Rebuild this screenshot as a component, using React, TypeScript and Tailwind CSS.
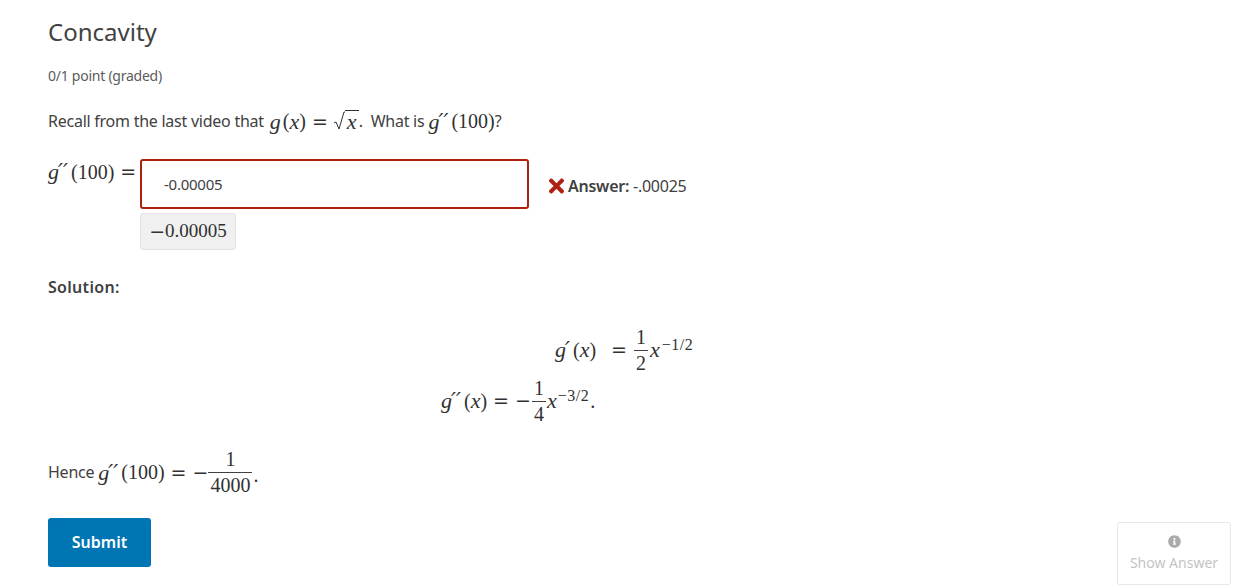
import type { ReactNode } from "react"
import { FaInfoCircle, FaTimes } from "react-icons/fa"

function V({ children, className = "" }: { children: ReactNode; className?: string }) {
  return <i className={`font-['Liberation_Serif',serif] text-[22px] ${className}`}>{children}</i>
}

// wide operators, closer to the math font than the serif's own = and −
function Op({ children, className = "" }: { children: string; className?: string }) {
  return <span className={`font-['DejaVu_Sans',sans-serif] text-[19px] ${className}`}>{children}</span>
}

function Frac({ top, bottom }: { top: string; bottom: string }) {
  return (
    <span className="inline-flex flex-col items-center align-middle leading-none">
      <span className="px-[2px] pb-[3px] text-[20px] leading-[20px]">{top}</span>
      <span className="self-stretch border-t border-[#414141] px-[2px] pt-[2px] text-center text-[20px] leading-[20px]">{bottom}</span>
    </span>
  )
}

function Math({ children, className = "" }: { children: ReactNode; className?: string }) {
  return (
    <span className={`inline-flex items-center whitespace-nowrap font-['Liberation_Serif',serif] text-[20px] tracking-normal text-[#313131] ${className}`}>
      {children}
    </span>
  )
}

function G({ primes = 0 }: { primes?: number }) {
  return (
    <span className="mr-[2px] inline-flex">
      <V>g</V>
      {primes > 0 && (
        <i className="-ml-[1px] mr-[1px] mt-[7px] font-['DejaVu_Sans',sans-serif] text-[22px] leading-[20px]">
          {primes === 2 ? "′′" : "′"}
        </i>
      )}
    </span>
  )
}

function Exp({ children }: { children: ReactNode }) {
  return <span className="-mt-[10px] text-[16px] leading-[20px] tracking-[0.5px]">{children}</span>
}

export default function App() {
  return (
    <div className="h-[588px] overflow-hidden bg-white pl-12 pt-[17px] font-['Noto_Sans',sans-serif] tracking-[-0.25px] text-[#414141]">
      <h3 className="text-[24px] leading-[30px] tracking-normal">Concavity</h3>
      <div className="mt-[19px] text-[14px] leading-[20px] text-[#5b5b5b]">0/1 point (graded)</div>

      <p className="mt-[22px] flex h-[26px] items-center text-[16px]">
        Recall from the last video that
        <Math className="ml-[6px]">
          <G />
          (<V>x</V>)<Op className="ml-[6px] mr-[5px]">=</Op>
          <svg viewBox="0 0 12 20" className="h-[22px] w-[12px] text-[#313131]" fill="none" stroke="currentColor">
            <path d="M1 12l2-1 3 7L11 1h1" strokeWidth="1" />
          </svg>
          <span className="border-t border-[#313131] px-[2px] leading-[22px]">
            <V>x</V>
          </span>
        </Math>
        <span>.</span>
        <span className="ml-[8px]">What is</span>
        <Math className="ml-[4px]">
          <G primes={2} />
          (100)
        </Math>
        <span>?</span>
      </p>

      <div className="mt-[25px] flex items-start">
        <Math className="-mt-[4px] w-[92px]">
          <G primes={2} />
          (100)<Op className="ml-[6px]">=</Op>
        </Math>
        <div className="flex flex-col">
          <div className="flex h-[50px] w-[389px] items-center rounded-[3px] border-2 border-[#b02010] pl-[22px] pt-[1px] text-[15px]">
            -0.00005
          </div>
          <div className="mt-[4px] flex h-[37px] w-[96px] items-center justify-center rounded-[3px] border border-[#e4e4e4] bg-[#f0f0f0]">
            <Math>
              <Op>−</Op>
              <span className="text-[19px]">0.00005</span>
            </Math>
          </div>
        </div>
        <div className="ml-[19px] mt-[15px] flex items-center gap-[3px] text-[16px]">
          <FaTimes className="h-[22px] w-[17px] text-[#b02010]" />
          <span>
            <span className="font-semibold">Answer:</span> -.00025
          </span>
        </div>
      </div>

      <div className="mt-[25px] text-[16px] font-semibold leading-[24px] tracking-[0.3px]">Solution:</div>

      <div className="mt-[25px] flex flex-col pl-[393px]">
        <Math className="ml-[114px] h-[51px]">
          <G primes={1} />
          (<V>x</V>)<Op className="ml-[15px] mr-[7px]">=</Op>
          <Frac top="1" bottom="2" />
          <V className="mx-[2px]">x</V>
          <Exp>−1/2</Exp>
        </Math>
        <Math className="h-[51px]">
          <G primes={2} />
          (<V>x</V>)<Op className="mx-[6px]">=</Op>
          <Op className="mr-[1px]">−</Op>
          <Frac top="1" bottom="4" />
          <V className="mx-[1px]">x</V>
          <Exp>−3/2</Exp>
          <span className="ml-[1px]">.</span>
        </Math>
      </div>

      <div className="mt-[21px] flex h-[50px] items-center text-[16px]">
        Hence
        <Math className="ml-[4px]">
          <G primes={2} />
          (100)<Op className="mx-[6px]">=</Op>
          <Op>−</Op>
          <Frac top="1" bottom="4000" />
          <span className="ml-[1px] mt-[6px]">.</span>
        </Math>
      </div>

      <div className="flex items-start justify-between pr-[13px]">
        <button className="mt-[21px] h-[49px] w-[103px] rounded-[3px] bg-[#0075b4] pb-[2px] text-[16px] font-semibold tracking-normal text-white">
          Submit
        </button>
        <button className="mt-[25px] flex h-[63px] w-[114px] flex-col items-center justify-center rounded-[3px] border border-[#e8e8e8] text-[14px] tracking-normal text-[#c4c4c4]">
          <FaInfoCircle className="h-[13px] w-[13px] text-[#ababab]" />
          <span className="mt-[4px]">Show Answer</span>
        </button>
      </div>
    </div>
  )
}
